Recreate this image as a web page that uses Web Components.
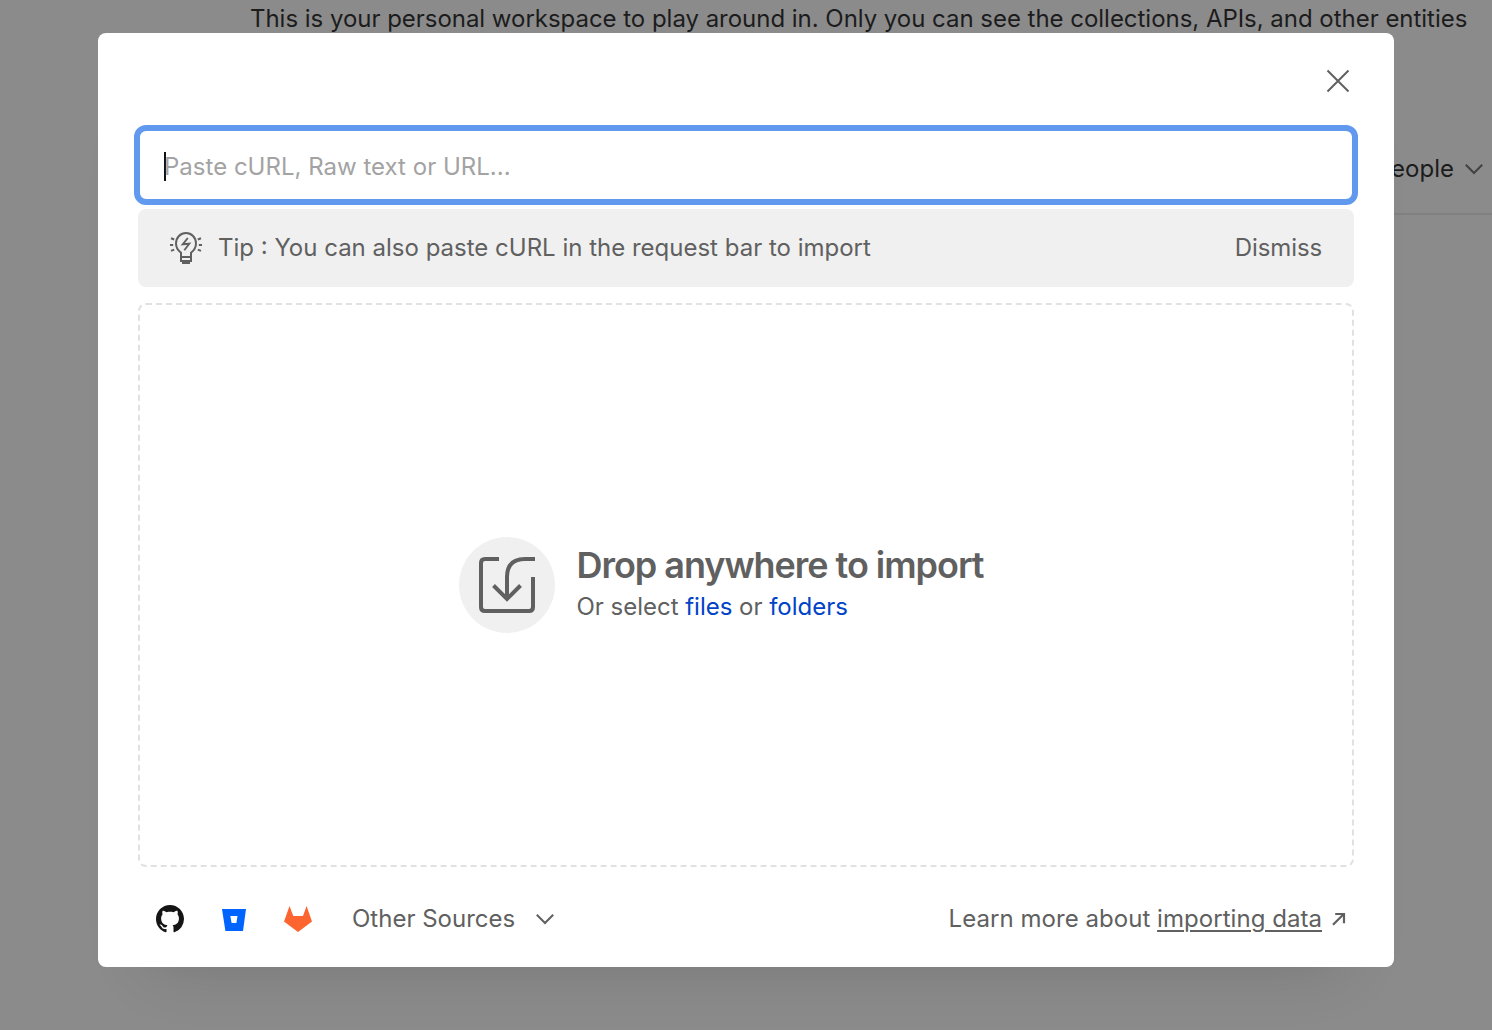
<!DOCTYPE html>
<html lang="en">
<head>
<meta charset="utf-8">
<title>Import</title>
<style>
html,body{margin:0;height:100%;overflow:hidden}
body{font-family:Inter,"Liberation Sans",sans-serif;font-size:24px;line-height:40px;color:#606060}
</style>
</head>
<body>
<app-shell>
  <workspace-page></workspace-page>
  <import-dialog slot="dialog">
    <icon-glyph slot="header" name="close"></icon-glyph>
    <import-field placeholder="Paste cURL, Raw text or URL..."></import-field>
    <tip-banner action="Dismiss">Tip : You can also paste cURL in the request bar to import</tip-banner>
    <drop-zone></drop-zone>
    <import-sources slot="footer"></import-sources>
  </import-dialog>
</app-shell>
<script>
const glyphs = {
  close: [24, 24, '<path d="M1.5 1.5 22.5 22.5M22.5 1.5 1.5 22.5" fill="none" stroke="currentColor" stroke-width="2"/>'],
  chevron: [18, 12, '<path d="M.8 1.7 9 10 17.2 1.7" fill="none" stroke="currentColor" stroke-width="2"/>'],
  bulb: [32, 32, '<g fill="none" stroke="currentColor" stroke-width="2"><path d="M11 24v-3.2C8 18.5 6 15.5 6 11.5 6 5.5 10.5 1 16 1s10 4.500 10 10.500c0 4-2 7-5 9.300V24"/><path d="M11 24.900h10v4.100H11z"/><path d="M17.800 6 12.700 12.300 19.300 11.700 14.300 18.300" stroke-width="1.900"/><path d="M1 6.200l3.200 1.300M0 13h3.200M1 18.900l3.200-1.300M31 6.200l-3.200 1.300M32 13h-3.200M31 18.900l-3.200-1.300"/></g><path d="M12 29h8v3h-8z" fill="currentColor"/>'],
  drop: [56, 56, '<g fill="none" stroke="currentColor" stroke-width="4"><path d="M20 2H6Q2 2 2 6V50Q2 54 6 54H50Q54 54 54 50V20"/><path d="M56 2H46Q28 2 28 20V42M14.500 28.500 28 42 41.500 28.500"/></g>'],
  github: [28, 28, '<path transform="scale(1.75)" fill="#151515" d="M8 0C3.580 0 0 3.580 0 8c0 3.540 2.290 6.530 5.470 7.590.4.070.55-.17.55-.38 0-.19-.01-.82-.01-1.490-2.010.37-2.530-.49-2.690-.94-.09-.23-.48-.94-.82-1.130-.28-.15-.68-.52-.01-.53.63-.01 1.080.58 1.230.82.72 1.210 1.870.87 2.330.66.070-.52.28-.87.51-1.070-1.780-.2-3.640-.89-3.640-3.950 0-.87.31-1.590.82-2.150-.08-.2-.36-1.020.08-2.120 0 0 .67-.21 2.200.82.64-.18 1.320-.27 2-.27s1.360.09 2 .27c1.530-1.040 2.200-.82 2.200-.82.44 1.100.16 1.920.08 2.120.51.56.82 1.270.82 2.150 0 3.070-1.870 3.750-3.650 3.950.29.25.54.73.54 1.480 0 1.070-.01 1.930-.01 2.200 0 .21.15.46.55.38A8.010 8.010 0 0 0 16 8c0-4.420-3.580-8-8-8z"/>'],
  bitbucket: [24, 24, '<path fill="#0065ff" fill-rule="evenodd" d="M0 2H24L21 24H3.400ZM8.300 9 9.600 16H14.400L15.500 9Z"/>'],
  gitlab: [28, 26, '<path fill="#fc6430" d="M5.500 0 9.300 10H19L22.600 0 28 15.500 14 26 0 15.500Z"/>'],
  arrow: [14, 14, '<path d="M1 12.800 11.800 2M3.200 2H12V11.300" fill="none" stroke="currentColor" stroke-width="2.200"/>']
};

function define(name, css, markup) {
  customElements.define(name, class extends HTMLElement {
    constructor() {
      super();
      const t = document.createElement('template');
      const html = typeof markup === 'function' ? markup(this) : markup;
      t.innerHTML = '<style>:host,*{box-sizing:border-box}' + css + '</style>' + html;
      this.attachShadow({ mode: 'open' }).append(t.content.cloneNode(true));
    }
  });
}

define('icon-glyph', ':host{display:inline-flex;flex:none}svg{display:block;overflow:visible}', el => {
  const [w, h, body] = glyphs[el.getAttribute('name')];
  return `<svg width="${w}" height="${h}" viewBox="0 0 ${w} ${h}" aria-hidden="true">${body}</svg>`;
});

define('app-shell',
  `:host{display:block;position:relative;width:100%;height:100vh;overflow:hidden;background:#8b8b8b}
   .overlay{position:absolute;inset:0;display:flex;justify-content:center;align-items:flex-start;padding-top:33px}`,
  '<slot></slot><div class="overlay"><slot name="dialog"></slot></div>');

define('workspace-page',
  `:host{display:flex;flex-direction:column;color:#1c1c1c}
   p{margin:0;padding:0 0 0 250px;height:124px;line-height:38px;white-space:nowrap;letter-spacing:-.03px}
   .bar{display:flex;align-items:center;justify-content:flex-end;gap:11px;height:91px;margin-left:250px;padding-right:9px;border-bottom:2px solid #808080}
   icon-glyph{color:#424242}`,
  `<p>This is your personal workspace to play around in. Only you can see the collections, APIs, and other entities</p>
   <div class="bar"><span>People</span><icon-glyph name="chevron"></icon-glyph></div>`);

define('import-dialog',
  `:host{display:flex;flex-direction:column;width:1296px;height:934px;padding:0 40px;background:#fff;border-radius:8px;box-shadow:0 50px 60px -50px rgba(0,0,0,.14)}
   header{display:flex;justify-content:flex-end;align-items:center;height:96px;padding-right:4px}
   main{display:flex;flex-direction:column}
   footer{flex:1}`,
  '<header><slot name="header"></slot></header><main><slot></slot></main><footer><slot name="footer"></slot></footer>');

define('import-field',
  `:host{display:flex;align-items:center;height:80px;margin:-4px -4px 4px;padding:2px 24px 0;border:6px solid #6199ee;border-radius:12px}
   i{width:2px;height:29px;background:#111;margin-right:-2px}
   span{color:#a3a3a3;padding-top:2px;letter-spacing:.01px}`,
  el => `<i></i><span>${el.getAttribute('placeholder')}</span>`);

define('tip-banner',
  `:host{display:flex;align-items:center;gap:16px;height:78px;padding:0 32px;background:#f0f0f0;border-radius:8px}
   .text{flex:1}.action{letter-spacing:-.12px}`,
  el => `<icon-glyph name="bulb"></icon-glyph><span class="text"><slot></slot></span><span class="action">${el.getAttribute('action')}</span>`);

define('drop-zone',
  `:host{display:flex;align-items:center;justify-content:center;gap:22px;height:564px;margin-top:16px;padding-right:50px;border:2px dashed #e1e1e1;border-radius:8px}
   .disc{display:flex;align-items:center;justify-content:center;width:96px;height:96px;border-radius:50%;background:#f0f0f0}
   h2{margin:-1px 0 1px;font-size:36px;font-weight:600;line-height:44px;letter-spacing:-1.04px}
   p{margin:0;line-height:38px;letter-spacing:-.02px}
   a{color:#0043c6}`,
  `<div class="disc"><icon-glyph name="drop"></icon-glyph></div>
   <div><h2>Drop anywhere to import</h2><p>Or select <a>files</a> or <a>folders</a></p></div>`);

define('import-sources',
  `:host{display:flex;align-items:center;height:100%;padding:3px 8px 0 18px}
   .github{margin-right:38px}.bitbucket{margin-right:38px}.gitlab{margin-right:40px}
   .other{display:flex;align-items:center;gap:21px;flex:1}
   .learn{margin-right:10px;letter-spacing:.045px}
   a{text-decoration:underline;text-decoration-thickness:2px;text-underline-offset:3px}`,
  `<icon-glyph class="github" name="github"></icon-glyph><icon-glyph class="bitbucket" name="bitbucket"></icon-glyph><icon-glyph class="gitlab" name="gitlab"></icon-glyph>
   <span class="other"><span>Other Sources</span><icon-glyph name="chevron"></icon-glyph></span>
   <span class="learn">Learn more about <a>importing data</a></span><icon-glyph name="arrow"></icon-glyph>`);
</script>
</body>
</html>
